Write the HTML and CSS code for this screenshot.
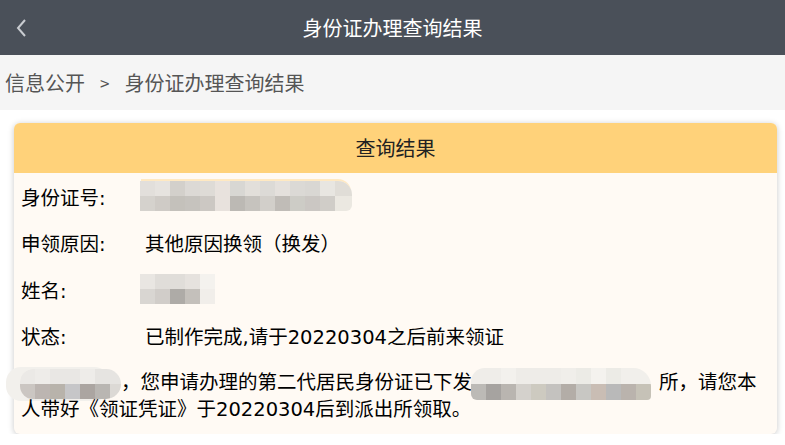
FILE: index.html
```html
<!DOCTYPE html>
<html lang="zh-CN">
<head>
  <meta charset="UTF-8" />
  <meta name="viewport" content="width=device-width, initial-scale=1" />
  <title>身份证办理查询结果</title>
  <link rel="stylesheet" href="styles.css">
</head>
<body>
  <header class="topbar">
    <a class="back" href="#" aria-label="返回">
      <svg width="12" height="20" viewBox="0 0 12 20">
        <path d="M9 2 L2 10 L9 18" fill="none" stroke="#c9ccd1" stroke-width="2" />
      </svg>
    </a>
    <h1>身份证办理查询结果</h1>
    <span></span>
  </header>

  <nav class="crumbs">
    <span>信息公开</span>
    <span class="sep">&gt;</span>
    <span>身份证办理查询结果</span>
  </nav>

  <main class="page">
    <section class="card">
      <h2 class="card-title">查询结果</h2>
      <div class="card-body">
        <div class="row">
          <span class="label">身份证号:</span>
          <span class="mosaic mosaic-id"></span>
        </div>
        <div class="row">
          <span class="label">申领原因:</span>
          <span class="value">其他原因换领（换发）</span>
        </div>
        <div class="row">
          <span class="label">姓名:</span>
          <span class="mosaic mosaic-name"></span>
        </div>
        <div class="row">
          <span class="label">状态:</span>
          <span class="value">已制作完成,请于20220304之后前来领证</span>
        </div>
        <p class="notice"><span class="mosaic mosaic-who"></span>，您申请办理的第二代居民身份证已下发<span class="mosaic mosaic-place"></span>所，请您本<br>人带好《领证凭证》于20220304后到派出所领取。</p>
      </div>
    </section>
  </main>
</body>
</html>
```

FILE: styles.css
```css
/* Base */
body {
  margin: 0;
  font-family: "Noto Sans CJK SC", "Noto Sans", sans-serif;
  background-color: #fff;
  color: #111;
}

/* Top bar */
.topbar {
  height: 55px;
  background-color: #4a5059;
  display: grid;
  grid-template-columns: 1fr auto 1fr;
  align-items: center;
}

.back {
  display: flex;
  align-items: center;
  padding-left: 16px;
}

.topbar h1 {
  margin: 0;
  font-size: 20px;
  font-weight: 400;
  color: #fff;
}

/* Breadcrumb */
.crumbs {
  height: 55px;
  background-color: #f5f5f5;
  display: flex;
  align-items: center;
  padding-left: 5px;
  font-size: 20px;
  color: #555;
}

.crumbs .sep {
  font-size: 17px;
  margin: 0 15px 0 15px;
}

/* Card */
.page {
  padding: 13px 8px 0 14px;
}

.card {
  border-radius: 6px;
  box-shadow: 0 1px 6px rgba(0, 0, 0, 0.22);
  background-color: #fffaf4;
}

.card-title {
  margin: 0;
  height: 50px;
  line-height: 50px;
  text-align: center;
  font-size: 20px;
  font-weight: 400;
  color: #222;
  background-color: #ffd27a;
  border-radius: 6px 6px 0 0;
}

.card-body {
  padding: 0 0 11px 7px;
  font-family: "DejaVu Sans", "Noto Sans CJK SC", sans-serif;
  font-size: 19.5px;
  color: #000;
}

.row {
  height: 46.5px;
  display: flex;
  align-items: center;
}

.label {
  width: 124px;
  flex-shrink: 0;
}

.notice {
  margin: 10px 0 0;
  line-height: 27px;
}

/* Pixelated (hidden) data */
.mosaic {
  display: inline-block;
  vertical-align: middle;
  background-repeat: no-repeat;
  background-size: 100% 50%;
  background-position: top, bottom;
}

.notice .mosaic {
  margin-top: -8px;
  margin-bottom: -8px;
}

.mosaic-id {
  width: 212px;
  height: 30px;
  margin-left: -5px;
  border-radius: 0 14px 6px 0;
  box-shadow: 0 -3px 0 -1px rgba(255, 222, 160, 0.6);
  background-image:
    linear-gradient(90deg, #e2dfdb 0 15px, #e6e3df 15px 30px, #d3d0cb 30px 45px, #dcd9d5 45px 60px, #dedbd6 60px 75px, #e8e2dd 75px 90px, #d8d7d3 90px 105px, #e2dfda 105px 120px, #dcdad6 120px 135px, #e4e0dc 135px 150px, #dbd9d5 150px 165px, #d9d7d3 165px 180px, #e8e6e1 180px 195px, #e0ddd7 195px),
    linear-gradient(90deg, #d5d2cd 0 15px, #cfcbc6 15px 30px, #c4c1bb 30px 45px, #c6c3be 45px 60px, #ccc8c3 60px 75px, #e8e2dd 75px 90px, #bcb9b4 90px 105px, #c6c3be 105px 120px, #d2cfca 120px 135px, #c0bcb7 135px 150px, #cdccc6 150px 165px, #cbc7c3 165px 180px, #d0cdc8 180px 195px, #ebe8e1 195px);
}

.mosaic-name {
  width: 75px;
  height: 30px;
  margin-left: -5px;
  background-image:
    linear-gradient(90deg, #e9e6e2 0 15px, #e0ddd9 15px 45px, #e6e2de 45px 60px, #f4f2ee 60px),
    linear-gradient(90deg, #d9d6d2 0 15px, #d1cdc9 15px 30px, #aeaba7 30px 45px, #c4c0bb 45px 60px, #f1eeea 60px);
}

.mosaic-who {
  width: 101px;
  height: 30px;
  margin-left: -1px;
  border-radius: 14px 16px 16px 14px;
  box-shadow: -12px 0 0 2px #f2f0ec;
  background-image:
    linear-gradient(90deg, #ebe9e6 0 15px, #eeece9 15px 30px, #e9e7e4 30px 60px, #eeece9 60px 75px, #e6e4e1 75px),
    linear-gradient(90deg, #cbc6c2 0 15px, #bcb5b1 15px 30px, #b8b3ab 30px 45px, #c6c6c8 45px 60px, #aba5a1 60px 75px, #b9b6b2 75px 90px, #dcd9d5 90px);
}

.mosaic-place {
  width: 180px;
  height: 32px;
  margin-left: -1px;
  margin-right: 8px;
  border-radius: 14px 18px 4px 6px;
  background-image:
    linear-gradient(90deg, #efede9 0 30px, #f3f1ed 30px 45px, #eeece8 45px 90px, #f0eeea 90px 105px, #ecebe6 105px 120px, #f4f2ee 120px 135px, #ecebe6 135px 150px, #f1efeb 150px),
    linear-gradient(90deg, #bcbab6 0 15px, #a6a3a0 15px 30px, #b9b5b0 30px 45px, #d4d1cc 45px 60px, #cdcac0 60px 75px, #c4c2bf 75px 90px, #b3ada7 90px 105px, #c8c7c3 105px 120px, #c9bdb4 120px 135px, #b9b9b9 135px 150px, #bab3ad 150px 165px, #c6c2b7 165px);
}
```
